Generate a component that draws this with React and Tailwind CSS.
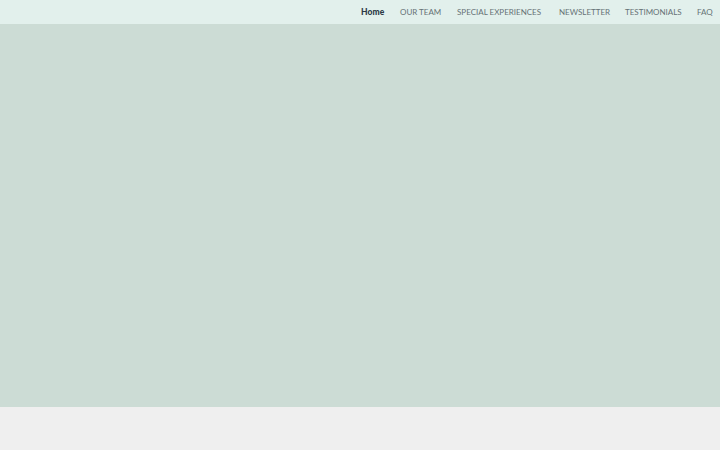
const NAV_ITEMS = [
  { label: 'OUR TEAM', width: 'w-[41px]' },
  { label: 'SPECIAL EXPERIENCES', width: 'w-[86px]' },
  { label: 'NEWSLETTER', width: 'w-[50px]' },
  { label: 'TESTIMONIALS', width: 'w-[56px]' },
  { label: 'FAQ', width: 'w-[15px]' },
]

export default function App() {
  return (
    <div className="flex h-[450px] w-[720px] flex-col overflow-hidden bg-[#efefef] font-['Lato','Liberation_Sans',sans-serif]">
      <nav className="flex h-[24px] items-center justify-end gap-[16px] bg-[#e2f0ec] pr-[8px]">
        <a className="w-[23px] whitespace-nowrap text-[8.5px] font-black tracking-[0.1px] text-[#2c3a46]">Home</a>
        {NAV_ITEMS.map((item) => (
          <a
            key={item.label}
            className={`${item.width} whitespace-nowrap text-[8px] text-[#667276]`}
          >
            {item.label}
          </a>
        ))}
      </nav>
      <div className="h-[383px] bg-[#ccdcd5]" />
      <div className="flex-1 bg-[#efefef]" />
    </div>
  )
}
